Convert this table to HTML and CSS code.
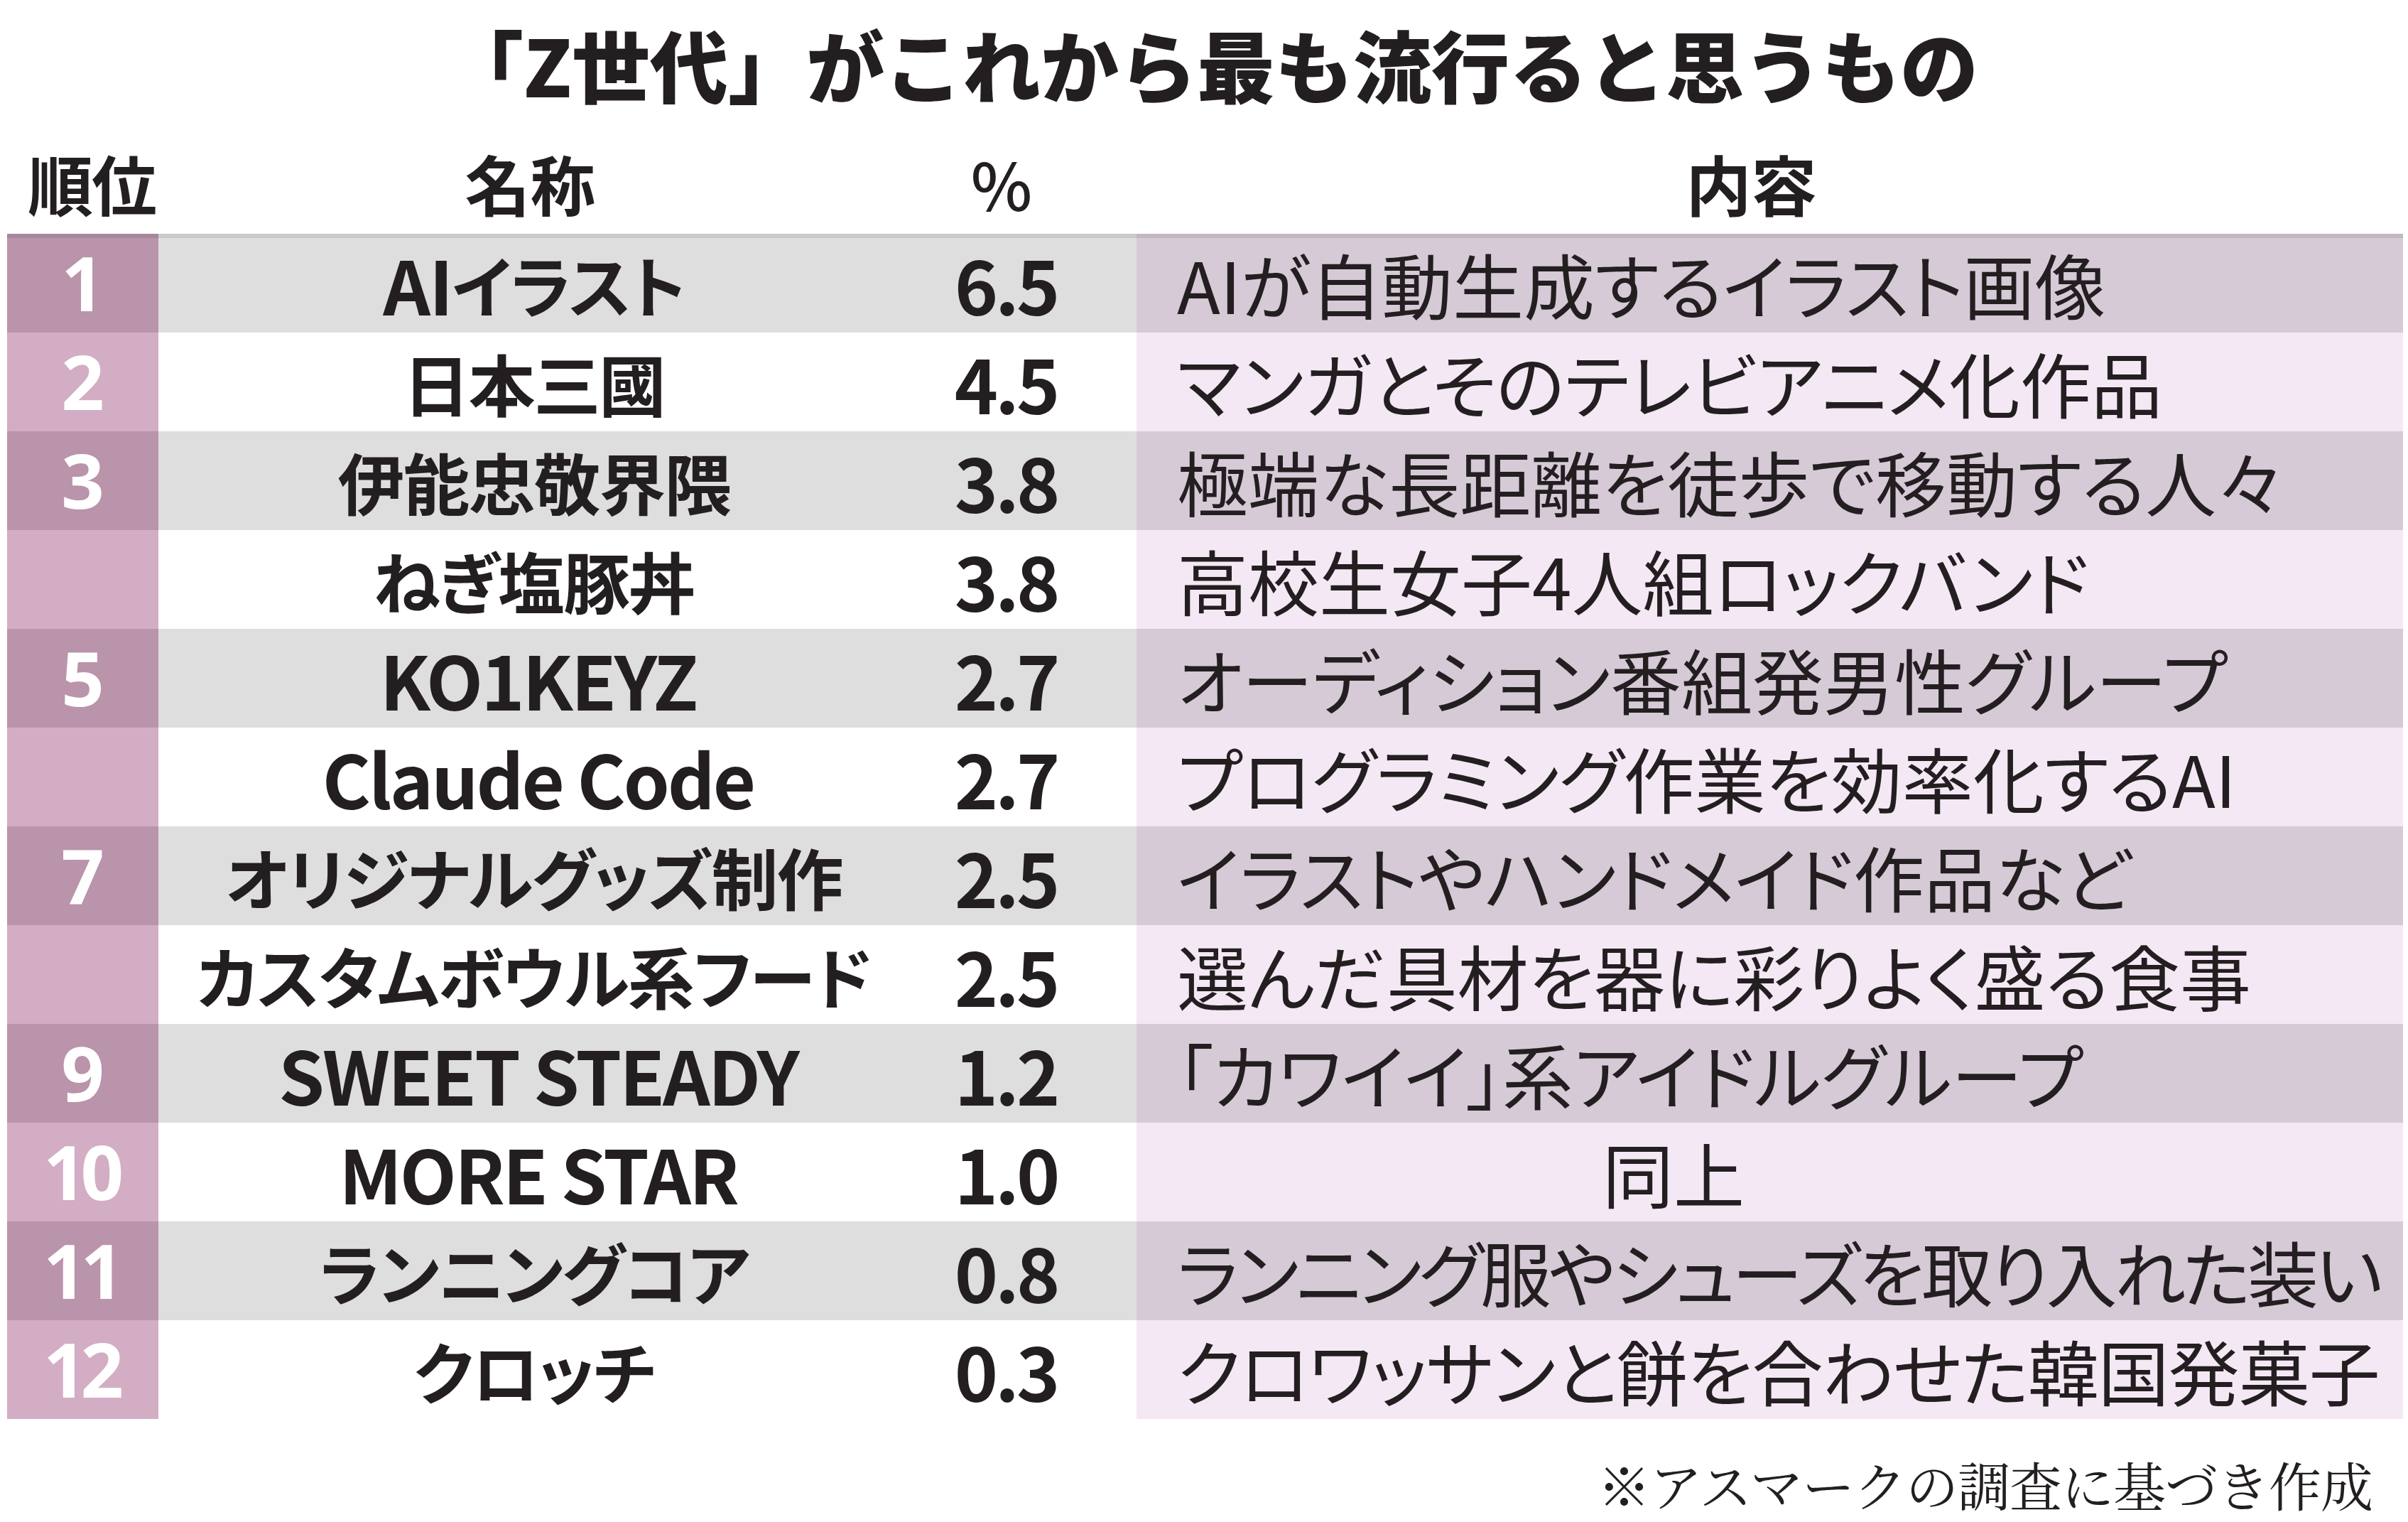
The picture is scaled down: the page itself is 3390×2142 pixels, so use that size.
FILE: index.html
```html
<!DOCTYPE html>
<html lang="ja">
<head>
<meta charset="utf-8">
<title>「Z世代」がこれから最も流行ると思うもの</title>
<link rel="stylesheet" href="styles.css">
</head>
<body>
<div class="page">
  <h1 class="title">「Z世代」がこれから最も流行ると思うもの</h1>
  <div class="head">
    <div class="h-rank">順位</div>
    <div class="h-name">名称</div>
    <div class="h-pct">%</div>
    <div class="h-desc">内容</div>
  </div>
  <div class="table">
    <div class="row odd"><div class="rank">1</div><div class="name"><span class="ai">AI</span>イラスト</div><div class="pct">6.5</div><div class="desc">AIが自動生成するイラスト画像</div></div>
    <div class="row even"><div class="rank">2</div><div class="name">日本三國</div><div class="pct">4.5</div><div class="desc">マンガとそのテレビアニメ化作品</div></div>
    <div class="row odd"><div class="rank">3</div><div class="name">伊能忠敬界隈</div><div class="pct">3.8</div><div class="desc">極端な長距離を徒歩で移動する人々</div></div>
    <div class="row even"><div class="rank"></div><div class="name">ねぎ塩豚丼</div><div class="pct">3.8</div><div class="desc">高校生女子4人組ロックバンド</div></div>
    <div class="row odd"><div class="rank">5</div><div class="name latin">KO1KEYZ</div><div class="pct">2.7</div><div class="desc">オーディション番組発男性グループ</div></div>
    <div class="row even"><div class="rank"></div><div class="name latin">Claude Code</div><div class="pct">2.7</div><div class="desc">プログラミング作業を効率化するAI</div></div>
    <div class="row odd"><div class="rank">7</div><div class="name">オリジナルグッズ制作</div><div class="pct">2.5</div><div class="desc">イラストやハンドメイド作品など</div></div>
    <div class="row even"><div class="rank"></div><div class="name">カスタムボウル系フード</div><div class="pct">2.5</div><div class="desc">選んだ具材を器に彩りよく盛る食事</div></div>
    <div class="row odd"><div class="rank">9</div><div class="name latin">SWEET STEADY</div><div class="pct">1.2</div><div class="desc">「カワイイ」系アイドルグループ</div></div>
    <div class="row even"><div class="rank two">10</div><div class="name latin">MORE STAR</div><div class="pct">1.0</div><div class="desc same">同上</div></div>
    <div class="row odd"><div class="rank two">11</div><div class="name">ランニングコア</div><div class="pct">0.8</div><div class="desc tight">ランニング服やシューズを取り入れた装い</div></div>
    <div class="row even"><div class="rank two">12</div><div class="name">クロッチ</div><div class="pct">0.3</div><div class="desc snug">クロワッサンと餅を合わせた韓国発菓子</div></div>
  </div>
  <p class="note">※アスマークの調査に基づき作成</p>
</div>
</body>
</html>
```

FILE: styles.css
```css
html, body {
  margin: 0;
  padding: 0;
  background: #ffffff;
}

body {
  width: 3390px;
  height: 2142px;
  overflow: hidden;
  font-family: "Noto Sans CJK JP", "Noto Sans", sans-serif;
  color: #231f20;
}

.page {
  display: flex;
  flex-direction: column;
}

.title {
  margin: 0;
  padding-top: 34px;
  height: 110px;
  line-height: 110px;
  font-size: 110px;
  font-weight: 900;
  text-align: center;
  letter-spacing: 0;
  padding-left: 22px;
}

.head {
  display: grid;
  grid-template-columns: 213px 1057px 320px 1783px;
  margin-left: 10px;
  height: 145px;
  padding-top: 40px;
  box-sizing: content-box;
  align-items: center;
  font-size: 92px;
  font-weight: 700;
  line-height: 1;
}

.h-rank {
  padding-left: 29px;
  letter-spacing: -2px;
}

.h-name {
  text-align: center;
  padding-right: 10px;
}

.h-pct {
  text-align: center;
  padding-right: 60px;
  font-weight: 500;
}

.h-desc {
  text-align: center;
  padding-right: 52px;
}

.table {
  display: flex;
  flex-direction: column;
  margin-left: 10px;
  width: 3373px;
}

.row {
  display: grid;
  grid-template-columns: 213px 1057px 320px 1783px;
  height: 139px;
  align-items: stretch;
}

.row > div {
  display: flex;
  align-items: center;
}

.row:first-child > div {
  box-shadow: inset 0 6px 0 rgba(0, 0, 0, 0.09);
}

.odd .rank { background: #b994ab; }
.even .rank { background: #d2adc4; }
.odd .name, .odd .pct { background: #dedede; }
.even .name, .even .pct { background: #ffffff; }
.odd .desc { background: #d6cad7; }
.even .desc { background: #f3e8f4; }

.rank {
  justify-content: center;
  color: #ffffff;
  font-family: "Open Sans", "Noto Sans", sans-serif;
  font-weight: 700;
  font-size: 106px;
  line-height: 1;
  padding-bottom: 4px;
  box-sizing: border-box;
}

.rank.two {
  letter-spacing: -8px;
  padding-right: 6px;
}

.name {
  justify-content: center;
  font-size: 94px;
  font-weight: 700;
  line-height: 1;
  letter-spacing: -2px;
  font-feature-settings: "palt";
  box-sizing: border-box;
}

.name .ai {
  font-size: 104px;
  letter-spacing: -2px;
}

.name.latin {
  font-size: 104px;
  font-weight: 700;
  letter-spacing: -3px;
  padding-left: 12px;
}

.pct {
  justify-content: center;
  padding-right: 48px;
  box-sizing: border-box;
  font-size: 104px;
  font-weight: 700;
  line-height: 1;
  letter-spacing: -4px;
}

.desc {
  padding-left: 57px;
  box-sizing: border-box;
  font-size: 100px;
  font-weight: 400;
  line-height: 1;
  font-feature-settings: "palt";
  white-space: nowrap;
}

.desc.tight {
  letter-spacing: -4px;
}

.desc.snug {
  letter-spacing: -1px;
}

.desc.same {
  padding-left: 656px;
}

.note {
  margin: 0;
  padding-top: 51px;
  padding-right: 50px;
  line-height: 80px;
  height: 80px;
  font-size: 74px;
  text-align: right;
  font-family: "Noto Serif CJK JP", "Noto Sans CJK JP", serif;
  font-weight: 400;
  letter-spacing: -1px;
}
```
